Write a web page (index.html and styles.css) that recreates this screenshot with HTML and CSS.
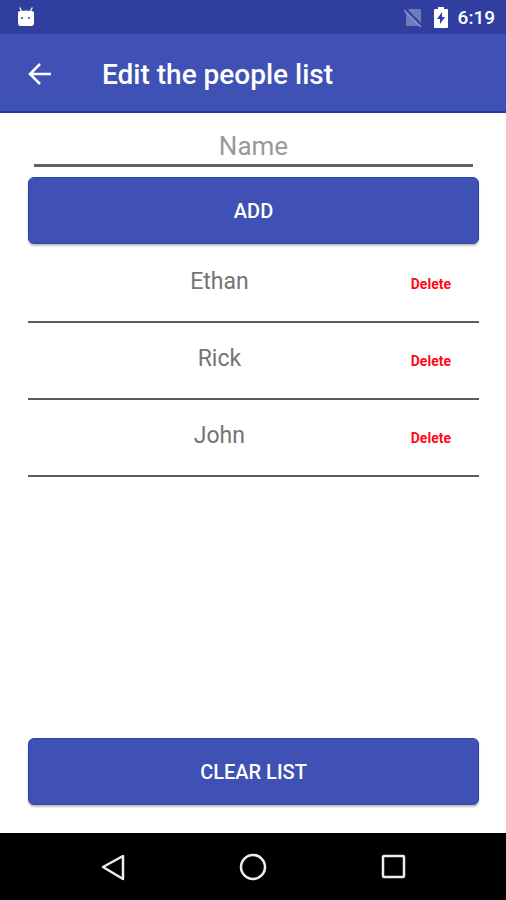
FILE: index.html
```html
<!DOCTYPE html>
<html lang="en">
<head>
<meta charset="utf-8">
<meta name="viewport" content="width=device-width, initial-scale=1">
<title>Edit the people list</title>
<link rel="stylesheet" href="styles.css">
</head>
<body>
<div class="status-bar">
  <svg class="status-robot" width="18" height="22" viewBox="0 0 18 22" aria-hidden="true">
    <path d="M3 2l2 4M15 2l-2 4" stroke="#dfe2f5" stroke-width="1.5" stroke-linecap="round"/>
    <path d="M1 7q0-2 2-2h2q4-1 8 0h2q2 0 2 2v10q0 3-3 3H4q-3 0-3-3z" fill="#fff"/>
    <circle cx="5" cy="12" r="1" fill="#303f9f"/>
    <circle cx="12" cy="12" r="1" fill="#303f9f"/>
  </svg>
  <div class="status-right">
    <svg width="20" height="22" viewBox="0 0 20 22" aria-hidden="true">
      <path d="M6 3h10q1 0 1 1v13L4 4zM2 6l13 14H3q-1 0-1-1z" fill="#6f7abf"/>
      <path d="M0 4l17 17" stroke="#8f98cf" stroke-width="1.5"/>
    </svg>
    <svg width="14" height="22" viewBox="0 0 14 22" aria-hidden="true">
      <path d="M4 1h6v2h3q1 0 1 1v17q0 1-1 1H1q-1 0-1-1V4q0-1 1-1h3z" fill="#fff"/>
      <path d="M8 6l-5 7h3v5l5-7H8z" fill="#303f9f"/>
    </svg>
    <span class="clock">6:19</span>
  </div>
</div>
<header class="app-bar">
  <button class="back" type="button" aria-label="Back">
    <svg width="24" height="24" viewBox="0 0 24 24" aria-hidden="true">
      <path d="M23 11H3M12 1L2 11l10 10" fill="none" stroke="#fff" stroke-width="2.5"/>
    </svg>
  </button>
  <h1 class="title">Edit the people list</h1>
</header>
<main class="content">
  <input class="name-field" type="text" placeholder="Name" aria-label="Name">
  <button class="action" type="button">ADD</button>
  <ul class="people">
    <li class="person"><span class="person-name">Ethan</span><button class="delete" type="button">Delete</button></li>
    <li class="person"><span class="person-name">Rick</span><button class="delete" type="button">Delete</button></li>
    <li class="person"><span class="person-name">John</span><button class="delete" type="button">Delete</button></li>
  </ul>
  <button class="action" type="button">CLEAR LIST</button>
</main>
<nav class="nav-bar" aria-label="System">
  <button class="nav-button" type="button" aria-label="Back">
    <svg width="28" height="28" viewBox="0 0 28 28" aria-hidden="true"><path d="M24 3v23L4 14z" fill="none" stroke="#eee" stroke-width="2.5" stroke-linejoin="round"/></svg>
  </button>
  <button class="nav-button" type="button" aria-label="Home">
    <svg width="28" height="28" viewBox="0 0 28 28" aria-hidden="true"><circle cx="14" cy="14" r="12" fill="none" stroke="#eee" stroke-width="2.5"/></svg>
  </button>
  <button class="nav-button" type="button" aria-label="Overview">
    <svg width="28" height="28" viewBox="0 0 28 28" aria-hidden="true"><rect x="4" y="3" width="21" height="21" rx="1" fill="none" stroke="#eee" stroke-width="2.5"/></svg>
  </button>
</nav>
</body>
</html>
```
FILE: styles.css
```css
* {
  box-sizing: border-box;
}

body {
  margin: 0;
  min-height: 100vh;
  display: flex;
  flex-direction: column;
  background: #fff;
  font-family: Roboto, "Liberation Sans", sans-serif;
}

button {
  border: 0;
  padding: 0;
  background: none;
  font-family: inherit;
}

svg {
  display: block;
}

.status-bar {
  display: flex;
  align-items: center;
  justify-content: space-between;
  height: 34px;
  padding: 0 11px 0 17px;
  background: #303f9f;
}

.status-right {
  display: flex;
  align-items: center;
  gap: 10px;
}

.clock {
  padding-top: 2px;
  color: #fff;
  font-size: 19px;
  font-weight: 500;
  line-height: 24px;
}

.app-bar {
  display: flex;
  align-items: center;
  gap: 50px;
  height: 79px;
  padding: 4px 28px 0;
  background: #3f51b5;
  border-bottom: 2px solid #2438a4;
}

.title {
  margin: 0;
  color: #fff;
  font-size: 28px;
  font-weight: 500;
  line-height: 32px;
}

.content {
  flex: 1;
  display: flex;
  flex-direction: column;
  padding: 16px 27px 28px 28px;
}

.name-field {
  margin: 0 6px 10px;
  height: 38px;
  padding: 0 0 2px;
  border: 0;
  border-bottom: 3px solid #616161;
  background: none;
  outline: 0;
  color: #333;
  font-family: inherit;
  font-size: 26px;
  text-align: center;
}

.name-field::placeholder {
  color: #999;
}

.action {
  flex: none;
  height: 67px;
  border: 1px solid #2f43ad;
  border-radius: 6px;
  background: #3f51b5;
  box-shadow: 0 2px 2px rgba(0, 0, 0, 0.25);
  color: #fff;
  font-size: 20px;
  font-weight: 500;
}

.people {
  flex: 1;
  margin: 2px 0 0;
  padding: 0;
  list-style: none;
}

.person {
  display: flex;
  align-items: center;
  height: 77px;
  padding: 0 28px 4px 0;
  border-bottom: 2px solid #5c5c5c;
}

.person-name {
  flex: 1;
  color: #757575;
  font-size: 23px;
  line-height: 28px;
  text-align: center;
}

.delete {
  padding-top: 4px;
  color: #ff0a14;
  font-size: 14px;
  font-weight: 700;
}

.nav-bar {
  display: flex;
  align-items: center;
  justify-content: center;
  gap: 112px;
  height: 67px;
  background: #000;
}
```
